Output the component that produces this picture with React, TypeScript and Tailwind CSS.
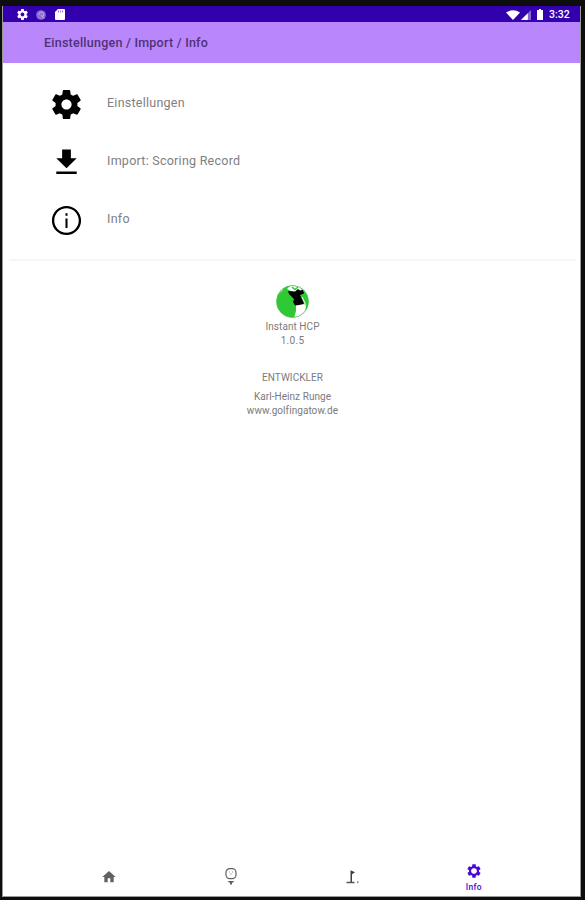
import React from 'react';

const GEAR_PATH =
  'M19.43 12.98c.04-.32.07-.64.07-.98s-.03-.66-.07-.98l2.11-1.65c.19-.15.24-.42.12-.64l-2-3.46c-.12-.22-.39-.3-.61-.22l-2.49 1c-.52-.4-1.08-.73-1.69-.98l-.38-2.65C14.46 2.18 14.25 2 14 2h-4c-.25 0-.46.18-.49.42l-.38 2.65c-.61.25-1.17.59-1.69.98l-2.49-1c-.23-.09-.49 0-.61.22l-2 3.46c-.13.22-.07.49.12.64l2.11 1.65c-.04.32-.07.65-.07.98s.03.66.07.98l-2.11 1.65c-.19.15-.24.42-.12.64l2 3.46c.12.22.39.3.61.22l2.49-1c.52.4 1.08.73 1.69.98l.38 2.65c.03.24.24.42.49.42h4c.25 0 .46-.18.49-.42l.38-2.65c.61-.25 1.17-.59 1.69-.98l2.49 1c.23.09.49 0 .61-.22l2-3.46c.12-.22.07-.49-.12-.64l-2.11-1.65zM12 15.5c-1.93 0-3.5-1.57-3.5-3.5s1.57-3.5 3.5-3.5 3.5 1.57 3.5 3.5-1.57 3.5-3.5 3.5z';
const DOWNLOAD_PATH = 'M19 9h-4V3H9v6H5l7 7 7-7zM5 18.2v1.6h14v-1.6H5z';
const INFO_PATH =
  'M11.3 7h1.4v1.7h-1.4zm0 3.6h1.4v6.6h-1.4zM12 2C6.48 2 2 6.48 2 12s4.48 10 10 10 10-4.48 10-10S17.52 2 12 2zm0 18.4c-4.64 0-8.4-3.76-8.4-8.4s3.76-8.4 8.4-8.4 8.4 3.76 8.4 8.4-3.76 8.4-8.4 8.4z';
const HOME_PATH = 'M10 20v-6h4v6h5v-8h3L12 3 2 12h3v8z';

type IconProps = {
  path: string;
  className?: string;
};

const Icon = ({ path, className = '' }: IconProps) => (
  <svg viewBox="0 0 24 24" fill="currentColor" className={`shrink-0 ${className}`}>
    <path d={path} />
  </svg>
);

const menuItems = [
  { label: 'Einstellungen', path: GEAR_PATH },
  { label: 'Import: Scoring Record', path: DOWNLOAD_PATH },
  { label: 'Info', path: INFO_PATH },
];

const StatusBar = () => (
  <div className="flex h-4 items-center justify-between bg-[#3200ad] pl-[13px] pr-[10px] pt-px text-white">
    <div className="flex items-center">
      <Icon path={GEAR_PATH} className="size-[13px]" />
      <svg viewBox="0 0 10 10" className="ml-[7px] size-[10px]">
        <circle cx="5" cy="5" r="4.8" fill="#8e6fd6" />
        <path d="M3 4.5a2.3 2.3 0 1 1 3.5 2M5 5l3 3.5" fill="none" stroke="#c5b3ee" strokeWidth="1" />
      </svg>
      <svg viewBox="0 0 10 11" className="ml-[9px] h-[11px] w-[10px]">
        <path d="M3 0h6a1 1 0 0 1 1 1v9a1 1 0 0 1-1 1H1a1 1 0 0 1-1-1V3z" fill="white" />
        <path d="M3.5 1.5v2M5.5 1.5v2M7.5 1.5v2" stroke="#3200ad" strokeWidth=".5" />
      </svg>
    </div>
    <div className="flex items-center">
      <svg viewBox="0 0 14 10" className="h-[10px] w-[14px]">
        <path d="M7 10 0 2.6Q7-2.2 14 2.6z" fill="white" />
      </svg>
      <svg viewBox="0 0 10 10" className="ml-px size-[10px]">
        <path d="M10 0v10H0z" fill="white" fillOpacity=".4" />
        <path d="M6.8 3.2V10H0z" fill="white" />
      </svg>
      <svg viewBox="0 0 6 11" className="ml-[6px] h-[11px] w-[6px]">
        <path d="M2 0h2v1h2v10H0V1h2z" fill="white" />
      </svg>
      <span className="ml-[6px] w-[21px] whitespace-nowrap text-[10.5px] font-medium leading-[15px]">3:32</span>
    </div>
  </div>
);

// Round app logo: green ball with the golfer's silhouette
const AppLogo = () => (
  <svg viewBox="0 0 33 33" className="size-[33px]">
    <defs>
      <clipPath id="ball">
        <circle cx="16.5" cy="16.5" r="16" />
      </clipPath>
    </defs>
    <g clipPath="url(#ball)">
      <path d="M0 0h33v33H0z" fill="#2fc936" />
      <path d="M11 4 15 0h8l3 5-6 3-5-2zM20 19l7-1 3 3-1 6-5 6h-6l2-7z" fill="white" />
      <path d="m16 2 3 2.5 3-2.5" fill="none" stroke="#2fc936" strokeWidth="1.4" />
      <path d="m12 6 7 .5 3-2.5 2 1.5 3-.5 1 3.5-4 1.5 2 4 2 5-5 1-4 .5-2-3.500 1-3-5-5z" fill="black" />
      <path d="m26 12 3 6v3M3 8l4-3.500" fill="none" stroke="white" strokeWidth="1" />
    </g>
    <circle cx="16.5" cy="16.5" r="16" fill="none" stroke="#48bd4d" strokeWidth=".7" />
  </svg>
);

const BottomNav = () => (
  <nav className="grid h-[50px] grid-cols-[45px_repeat(4,121.7px)] text-[#616161]">
    <div />
    <div className="flex justify-center pt-[23px]">
      <Icon path={HOME_PATH} className="size-4" />
    </div>
    <div className="flex justify-center pt-[21px]">
      <svg viewBox="0 0 14 18" className="h-[18px] w-[14px]" fill="none" stroke="currentColor">
        <rect x="2" y="1.6" width="10" height="10" rx="3.8" strokeWidth="1.2" />
        <path d="M5 5h.8M8 5h.8M6.300 7h1.200" strokeWidth=".8" />
        <path d="M3.500 14h7L8 16v1.500H6V16z" fill="currentColor" stroke="none" />
      </svg>
    </div>
    <div className="flex justify-center pt-[23px]">
      <svg viewBox="0 0 14 16" className="h-4 w-[14px]">
        <path d="M5.5 1.2 10 3.3 7 5.2V13H5.5z" fill="#3d3d3d" />
        <path d="M1.5 13.5h8M12 13.2h1.5" stroke="#555" strokeWidth="1.3" />
      </svg>
    </div>
    <div className="flex flex-col items-center pt-[17px] text-[#4b08d1]">
      <svg viewBox="0 0 24 24" fill="currentColor" className="size-4">
        <path d={GEAR_PATH} />
        <circle cx="12" cy="12" r="4.2" fill="white" />
      </svg>
      <span className="mt-[3px] text-[8.5px] font-medium leading-[10px] tracking-[0.3px]">Info</span>
    </div>
  </nav>
);

export default function App() {
  return (
    <div className="h-[900px] w-[585px] bg-[#0d0d0d] pb-[3px] pl-[2px] pr-[4px] pt-[6px] font-['Roboto',sans-serif]">
      <div className="flex h-full flex-col border-b border-l border-r border-[#999] bg-white">
        <StatusBar />
        <header className="flex h-[41px] items-center bg-[#ba86fc] pl-[41px] pt-[2px] text-[12.5px] text-[#4f3276]">
          <span className="font-medium tracking-[0.24px]">Einstellungen / Import / Info</span>
        </header>

        <ul className="flex flex-col pt-[12px]">
          {menuItems.map((item) => (
            <li key={item.label} className="flex h-[58px] items-center pl-[46px]">
              <Icon path={item.path} className="size-[35px] text-black" />
              <span className="ml-[23px] pb-[2px] text-[12.5px] tracking-[0.25px] text-[#808080]">{item.label}</span>
            </li>
          ))}
        </ul>

        <div className="ml-[6px] mr-[4px] mt-[10px] h-[2px] bg-[#f6f6f6]" />

        <main className="flex flex-1 flex-col items-center pl-[2px] pt-[24px] text-[10px] leading-[14px] tracking-[0.06px] text-[#7b7b7b]">
          <AppLogo />
          <div className="mt-[2px]">Instant HCP</div>
          <div className="tracking-[0.3px]">1.0.5</div>
          <div className="mt-[23px]">ENTWICKLER</div>
          <div className="mt-[5px]">Karl-Heinz Runge</div>
          <div>www.golfingatow.de</div>
        </main>

        <BottomNav />
      </div>
    </div>
  );
}
